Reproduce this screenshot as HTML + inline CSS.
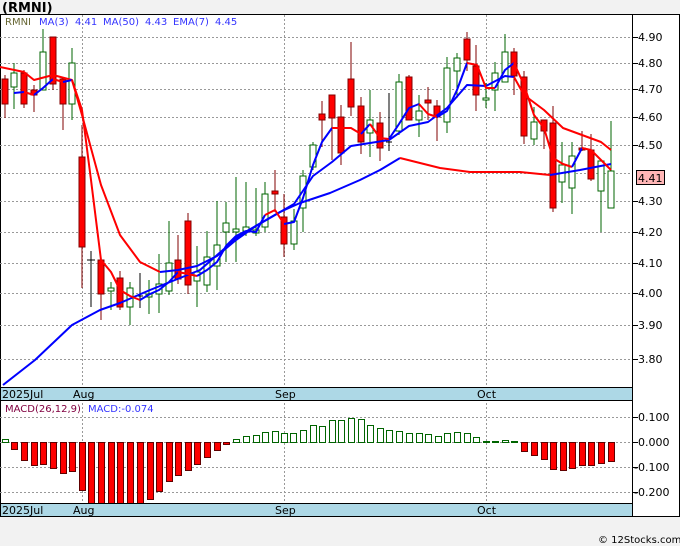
<!DOCTYPE html>
<html><head><meta charset="utf-8"><style>
body{margin:0;background:#f2f2f2;width:680px;height:546px;overflow:hidden}
svg{display:block;font-family:"DejaVu Sans","Liberation Sans",sans-serif}
</style></head><body>
<svg width="680" height="546" viewBox="0 0 680 546" xmlns="http://www.w3.org/2000/svg">
<rect x="0" y="0" width="680" height="546" fill="#f2f2f2"/>
<text x="2" y="12" font-size="13" font-weight="bold" fill="#000">(RMNI)</text>
<rect x="0.5" y="14.5" width="679" height="502" fill="#fff" stroke="#000"/>
<!-- grid -->
<g stroke="#999" stroke-dasharray="2,2" stroke-width="1">
<line x1="0" y1="37.5" x2="632" y2="37.5"/><line x1="0" y1="63.5" x2="632" y2="63.5"/>
<line x1="0" y1="89.5" x2="632" y2="89.5"/><line x1="0" y1="117.5" x2="632" y2="117.5"/>
<line x1="0" y1="145.5" x2="632" y2="145.5"/><line x1="0" y1="173.5" x2="632" y2="173.5"/>
<line x1="0" y1="201.5" x2="632" y2="201.5"/><line x1="0" y1="232.5" x2="632" y2="232.5"/>
<line x1="0" y1="263.5" x2="632" y2="263.5"/><line x1="0" y1="293.5" x2="632" y2="293.5"/>
<line x1="0" y1="325.5" x2="632" y2="325.5"/><line x1="0" y1="359.5" x2="632" y2="359.5"/>
<line x1="82.5" y1="15" x2="82.5" y2="516"/><line x1="284.5" y1="15" x2="284.5" y2="516"/><line x1="486.5" y1="15" x2="486.5" y2="516"/>
<line x1="0" y1="417.5" x2="632" y2="417.5"/><line x1="0" y1="442.5" x2="632" y2="442.5"/>
<line x1="0" y1="467.5" x2="632" y2="467.5"/><line x1="0" y1="492.5" x2="632" y2="492.5"/>
</g>
<g font-size="10">
<text x="5" y="25" fill="#666633">RMNI</text>
<text x="39" y="25" fill="#3333ff">MA(3)</text><text x="75" y="25" fill="#3333ff">4.41</text>
<text x="103" y="25" fill="#3333ff">MA(50)</text><text x="145" y="25" fill="#3333ff">4.43</text>
<text x="173" y="25" fill="#3333ff">EMA(7)</text><text x="215" y="25" fill="#3333ff">4.45</text>
</g>
<!-- candles -->
<g stroke-width="1">
<g stroke="#800000" fill="#ff0000">
<line x1="5" y1="75" x2="5" y2="118"/><rect x="2" y="79" width="6" height="25"/>
<line x1="24" y1="70" x2="24" y2="108"/><rect x="21" y="73" width="6" height="31"/>
<line x1="34" y1="85" x2="34" y2="112"/><rect x="31" y="90" width="6" height="5"/>
<line x1="53" y1="37" x2="53" y2="90"/><rect x="50" y="37" width="6" height="47"/>
<line x1="63" y1="79" x2="63" y2="130"/><rect x="60" y="79" width="6" height="25"/>
<line x1="82" y1="125" x2="82" y2="288"/><rect x="79" y="157" width="6" height="90"/>
<line x1="101" y1="258" x2="101" y2="320"/><rect x="98" y="260" width="6" height="34"/>
<line x1="120" y1="271" x2="120" y2="310"/><rect x="117" y="278" width="6" height="29"/>
<line x1="178" y1="235" x2="178" y2="284"/><rect x="175" y="260" width="6" height="19"/>
<line x1="188" y1="213" x2="188" y2="294"/><rect x="185" y="221" width="6" height="64"/>
<line x1="275" y1="170" x2="275" y2="212"/><rect x="272" y="191" width="6" height="3"/>
<line x1="284" y1="194" x2="284" y2="257"/><rect x="281" y="217" width="6" height="27"/>
<line x1="322" y1="101" x2="322" y2="147"/><rect x="319" y="114" width="6" height="6"/>
<line x1="332" y1="101" x2="332" y2="160"/><rect x="329" y="95" width="6" height="23"/>
<line x1="341" y1="105" x2="341" y2="165"/><rect x="338" y="117" width="6" height="36"/>
<line x1="351" y1="42" x2="351" y2="116"/><rect x="348" y="79" width="6" height="28"/>
<line x1="361" y1="97" x2="361" y2="154"/><rect x="358" y="106" width="6" height="36"/>
<line x1="380" y1="112" x2="380" y2="161"/><rect x="377" y="123" width="6" height="25"/>
<line x1="409" y1="75" x2="409" y2="120"/><rect x="406" y="77" width="6" height="43"/>
<line x1="428" y1="87" x2="428" y2="120"/><rect x="425" y="100" width="6" height="3"/>
<line x1="437" y1="100" x2="437" y2="141"/><rect x="434" y="106" width="6" height="11"/>
<line x1="467" y1="32" x2="467" y2="71"/><rect x="464" y="39" width="6" height="21"/>
<line x1="476" y1="45" x2="476" y2="111"/><rect x="473" y="66" width="6" height="29"/>
<line x1="514" y1="48" x2="514" y2="95"/><rect x="511" y="52" width="6" height="24"/>
<line x1="524" y1="71" x2="524" y2="144"/><rect x="521" y="77" width="6" height="59"/>
<line x1="544" y1="120" x2="544" y2="149"/><rect x="541" y="120" width="6" height="11"/>
<line x1="553" y1="106" x2="553" y2="212"/><rect x="550" y="123" width="6" height="85"/>
<line x1="582" y1="131" x2="582" y2="151"/><rect x="579" y="148" width="6" height="2"/>
<line x1="591" y1="134" x2="591" y2="181"/><rect x="588" y="150" width="6" height="29"/>
</g>
<g stroke="#006400" fill="#fff">
<line x1="14" y1="63" x2="14" y2="109"/><rect x="11" y="73" width="6" height="14"/>
<line x1="43" y1="29" x2="43" y2="90"/><rect x="40" y="52" width="6" height="38"/>
<line x1="72" y1="48" x2="72" y2="120"/><rect x="69" y="63" width="6" height="41"/>
<line x1="111" y1="282" x2="111" y2="310"/><rect x="108" y="288" width="6" height="3"/>
<line x1="130" y1="282" x2="130" y2="325"/><rect x="127" y="288" width="6" height="19"/>
<line x1="149" y1="280" x2="149" y2="314"/><rect x="146" y="294" width="6" height="3"/>
<line x1="159" y1="254" x2="159" y2="313"/><rect x="156" y="284" width="6" height="10"/>
<line x1="169" y1="221" x2="169" y2="295"/><rect x="166" y="263" width="6" height="28"/>
<line x1="197" y1="246" x2="197" y2="307"/><rect x="194" y="272" width="6" height="9"/>
<line x1="207" y1="231" x2="207" y2="292"/><rect x="204" y="257" width="6" height="28"/>
<line x1="217" y1="201" x2="217" y2="290"/><rect x="214" y="245" width="6" height="21"/>
<line x1="226" y1="202" x2="226" y2="262"/><rect x="223" y="223" width="6" height="9"/>
<line x1="236" y1="177" x2="236" y2="262"/><rect x="233" y="229" width="6" height="3"/>
<line x1="246" y1="182" x2="246" y2="236"/><rect x="243" y="227" width="6" height="4"/>
<line x1="256" y1="188" x2="256" y2="236"/><rect x="253" y="230" width="6" height="3"/>
<line x1="265" y1="182" x2="265" y2="232"/><rect x="262" y="194" width="6" height="33"/>
<line x1="294" y1="209" x2="294" y2="250"/><rect x="291" y="221" width="6" height="23"/>
<line x1="303" y1="170" x2="303" y2="232"/><rect x="300" y="176" width="6" height="32"/>
<line x1="313" y1="142" x2="313" y2="170"/><rect x="310" y="145" width="6" height="22"/>
<line x1="370" y1="90" x2="370" y2="157"/><rect x="367" y="120" width="6" height="13"/>
<line x1="399" y1="74" x2="399" y2="135"/><rect x="396" y="82" width="6" height="49"/>
<line x1="419" y1="95" x2="419" y2="137"/><rect x="416" y="111" width="6" height="9"/>
<line x1="447" y1="57" x2="447" y2="133"/><rect x="444" y="68" width="6" height="54"/>
<line x1="457" y1="53" x2="457" y2="98"/><rect x="454" y="58" width="6" height="13"/>
<line x1="486" y1="83" x2="486" y2="108"/><rect x="483" y="98" width="6" height="2"/>
<line x1="495" y1="62" x2="495" y2="111"/><rect x="492" y="73" width="6" height="17"/>
<line x1="505" y1="34" x2="505" y2="82"/><rect x="502" y="52" width="6" height="30"/>
<line x1="534" y1="107" x2="534" y2="145"/><rect x="531" y="122" width="6" height="17"/>
<line x1="562" y1="142" x2="562" y2="203"/><rect x="559" y="165" width="6" height="17"/>
<line x1="572" y1="142" x2="572" y2="214"/><rect x="569" y="156" width="6" height="32"/>
<line x1="601" y1="162" x2="601" y2="232"/><rect x="598" y="161" width="6" height="30"/>
<line x1="611" y1="121" x2="611" y2="208"/><rect x="608" y="171" width="6" height="37"/>
</g>
<g stroke="#000"><line x1="91" y1="251" x2="91" y2="307"/><line x1="87" y1="260" x2="95" y2="260"/>
<line x1="140" y1="273" x2="140" y2="308"/><line x1="137" y1="296" x2="143" y2="296"/>
<line x1="389" y1="93" x2="389" y2="151"/><line x1="386" y1="142" x2="392" y2="142"/></g>
</g>
<!-- lines -->
<g fill="none" stroke-width="2" stroke-linejoin="round">
<polyline stroke="#0000ff" points="3,385 35,360 72,325 100,310 120,303 150,290 200,270 240,235 280,212 300,203 330,193 360,180 380,170 400,158"/>
<polyline stroke="#ff0000" points="400,158 420,163 440,168 470,172 520,172 550,175"/>
<polyline stroke="#0000ff" points="550,175 580,170 611,164"/>
<polyline stroke="#ff0000" points="0,67 24,72 34,80 53,75 72,80 82,115 101,185 120,235 140,262 160,272"/>
<polyline stroke="#0000ff" points="160,272 178,270 197,266 217,256 236,240 256,226 275,215 294,204 313,176 332,162 351,146 370,143 389,140 409,126 428,122 447,108 467,85 486,86 505,76 514,77"/>
<polyline stroke="#ff0000" points="514,77 524,95 544,110 563,128 582,135 601,142 611,150"/>
<polyline stroke="#0000ff" points="14,93 24,92"/>
<polyline stroke="#ff0000" points="24,92 34,95"/>
<polyline stroke="#0000ff" points="34,95 43,88 53,79"/>
<polyline stroke="#ff0000" points="53,79 63,82"/>
<polyline stroke="#0000ff" points="63,82 72,80"/>
<polyline stroke="#ff0000" points="72,80 82,110 91,180 101,260 111,272 120,290 130,296 140,300"/>
<polyline stroke="#0000ff" points="140,300 150,294 159,290 169,282 178,272"/>
<polyline stroke="#ff0000" points="178,272 188,274 197,276"/>
<polyline stroke="#0000ff" points="197,276 207,270 217,262 226,246 236,236 246,231 256,232 265,215"/>
<polyline stroke="#ff0000" points="265,215 275,210 284,224"/>
<polyline stroke="#0000ff" points="284,224 294,222 303,198 313,165 322,142 332,128"/>
<polyline stroke="#ff0000" points="332,128 341,128 351,128 361,134"/>
<polyline stroke="#0000ff" points="361,134 370,124"/>
<polyline stroke="#ff0000" points="370,124 380,138 389,139"/>
<polyline stroke="#0000ff" points="389,139 399,124 409,108 419,104"/>
<polyline stroke="#ff0000" points="419,104 428,114 437,117"/>
<polyline stroke="#0000ff" points="437,117 447,111 457,90 467,63"/>
<polyline stroke="#ff0000" points="467,63 477,65 486,88 495,88"/>
<polyline stroke="#0000ff" points="495,88 505,70 514,63"/>
<polyline stroke="#ff0000" points="514,63 524,85 534,115 544,128 553,158 563,164 572,167"/>
<polyline stroke="#0000ff" points="572,167 582,148"/>
<polyline stroke="#ff0000" points="582,148 591,150 601,160 611,170"/>
</g>
<!-- MACD -->
<text x="5" y="412" font-size="10" fill="#800040">MACD(26,12,9)</text>
<text x="88" y="412" font-size="10" fill="#3333ff">MACD:-0.074</text>
<g stroke="#006400" fill="#fff">
<rect x="2.5" y="439.5" width="6" height="3"/>
<rect x="233.5" y="439.5" width="6" height="3"/><rect x="243.5" y="436.5" width="6" height="6"/>
<rect x="253.5" y="435.5" width="6" height="7"/><rect x="262.5" y="432.5" width="6" height="10"/>
<rect x="272.5" y="431.5" width="6" height="11"/><rect x="281.5" y="433.5" width="6" height="9"/>
<rect x="290.5" y="433.5" width="6" height="9"/><rect x="300.5" y="430.5" width="6" height="12"/>
<rect x="310.5" y="425.5" width="6" height="17"/><rect x="319.5" y="426.5" width="6" height="16"/>
<rect x="329.5" y="420.5" width="6" height="22"/><rect x="338.5" y="420.5" width="6" height="22"/>
<rect x="348.5" y="418.5" width="6" height="24"/><rect x="358.5" y="419.5" width="6" height="23"/>
<rect x="367.5" y="425.5" width="6" height="17"/><rect x="377.5" y="428.5" width="6" height="14"/>
<rect x="386.5" y="430.5" width="6" height="12"/><rect x="396.5" y="431.5" width="6" height="11"/>
<rect x="406.5" y="433.5" width="6" height="9"/><rect x="416.5" y="433.5" width="6" height="9"/>
<rect x="425.5" y="434.5" width="6" height="8"/><rect x="435.5" y="436.5" width="6" height="6"/>
<rect x="444.5" y="433.5" width="6" height="9"/><rect x="454.5" y="432.5" width="6" height="10"/>
<rect x="464.5" y="433.5" width="6" height="9"/><rect x="473.5" y="437.5" width="6" height="5"/>
<rect x="483.5" y="441.5" width="6" height="1"/><rect x="492.5" y="441.5" width="6" height="1"/>
<rect x="502.5" y="440.5" width="6" height="2"/><rect x="511.5" y="441.5" width="6" height="1"/>
</g>
<g stroke="#600000" fill="#ff0000">
<rect x="11.5" y="442.5" width="6" height="7"/><rect x="21.5" y="442.5" width="6" height="18"/>
<rect x="31.5" y="442.5" width="6" height="23"/><rect x="40.5" y="442.5" width="6" height="22"/>
<rect x="50.5" y="442.5" width="6" height="26"/><rect x="60.5" y="442.5" width="6" height="31"/>
<rect x="69.5" y="442.5" width="6" height="29"/><rect x="79.5" y="442.5" width="6" height="48"/>
<rect x="88.5" y="442.5" width="6" height="61"/><rect x="98.5" y="442.5" width="6" height="70"/>
<rect x="108.5" y="442.5" width="6" height="74"/><rect x="117.5" y="442.5" width="6" height="74"/>
<rect x="127.5" y="442.5" width="6" height="68"/><rect x="137.5" y="442.5" width="6" height="63"/>
<rect x="147.5" y="442.5" width="6" height="57"/><rect x="156.5" y="442.5" width="6" height="49"/>
<rect x="166.5" y="442.5" width="6" height="39"/><rect x="175.5" y="442.5" width="6" height="33"/>
<rect x="185.5" y="442.5" width="6" height="28"/><rect x="194.5" y="442.5" width="6" height="22"/>
<rect x="204.5" y="442.5" width="6" height="15"/><rect x="214.5" y="442.5" width="6" height="8"/>
<rect x="223.5" y="442.5" width="6" height="2"/>
<rect x="521.5" y="442.5" width="6" height="9"/><rect x="531.5" y="442.5" width="6" height="13"/>
<rect x="541.5" y="442.5" width="6" height="17"/><rect x="550.5" y="442.5" width="6" height="27"/>
<rect x="560.5" y="442.5" width="6" height="28"/><rect x="569.5" y="442.5" width="6" height="26"/>
<rect x="579.5" y="442.5" width="6" height="23"/><rect x="588.5" y="442.5" width="6" height="23"/>
<rect x="598.5" y="442.5" width="6" height="21"/><rect x="608.5" y="442.5" width="6" height="19"/>
</g>
<!-- bands -->
<rect x="0.5" y="387.5" width="632" height="13" fill="#add8e6" stroke="#000"/>
<rect x="0.5" y="503.5" width="632" height="13" fill="#add8e6" stroke="#000"/>
<g font-size="11" fill="#000">
<text x="2" y="398">2025Jul</text><text x="73" y="398">Aug</text><text x="275" y="398">Sep</text><text x="477" y="398">Oct</text>
<text x="2" y="514">2025Jul</text><text x="73" y="514">Aug</text><text x="275" y="514">Sep</text><text x="477" y="514">Oct</text>
</g>
<line x1="632.5" y1="14" x2="632.5" y2="517" stroke="#000"/>
<!-- right axis -->
<g stroke="#000">
<line x1="632" y1="37.5" x2="638" y2="37.5"/><line x1="632" y1="63.5" x2="638" y2="63.5"/>
<line x1="632" y1="89.5" x2="638" y2="89.5"/><line x1="632" y1="117.5" x2="638" y2="117.5"/>
<line x1="632" y1="145.5" x2="638" y2="145.5"/><line x1="632" y1="201.5" x2="638" y2="201.5"/>
<line x1="632" y1="232.5" x2="638" y2="232.5"/><line x1="632" y1="263.5" x2="638" y2="263.5"/>
<line x1="632" y1="293.5" x2="638" y2="293.5"/><line x1="632" y1="325.5" x2="638" y2="325.5"/>
<line x1="632" y1="359.5" x2="638" y2="359.5"/>
<line x1="632" y1="417.5" x2="638" y2="417.5"/><line x1="632" y1="442.5" x2="638" y2="442.5"/>
<line x1="632" y1="467.5" x2="638" y2="467.5"/><line x1="632" y1="492.5" x2="638" y2="492.5"/>
</g>
<g font-size="11" fill="#000">
<text x="638" y="41">4.90</text><text x="638" y="67">4.80</text><text x="638" y="93">4.70</text>
<text x="638" y="121">4.60</text><text x="638" y="149">4.50</text><text x="638" y="205">4.30</text>
<text x="638" y="236">4.20</text><text x="638" y="267">4.10</text><text x="638" y="297">4.00</text>
<text x="638" y="329">3.90</text><text x="638" y="363">3.80</text>
<text x="638" y="421">0.100</text><text x="638" y="446">0.000</text>
<text x="634" y="471">-0.100</text><text x="634" y="496">-0.200</text>
</g>
<rect x="636.5" y="170.5" width="28" height="14" fill="#ffb6b6" stroke="#000"/>
<text x="638" y="182" font-size="11" fill="#000">4.41</text>
<rect x="0" y="517" width="680" height="29" fill="#f2f2f2"/>
<text x="598" y="543" font-size="10" fill="#000">© 12Stocks.com</text>
</svg>
</body></html>
